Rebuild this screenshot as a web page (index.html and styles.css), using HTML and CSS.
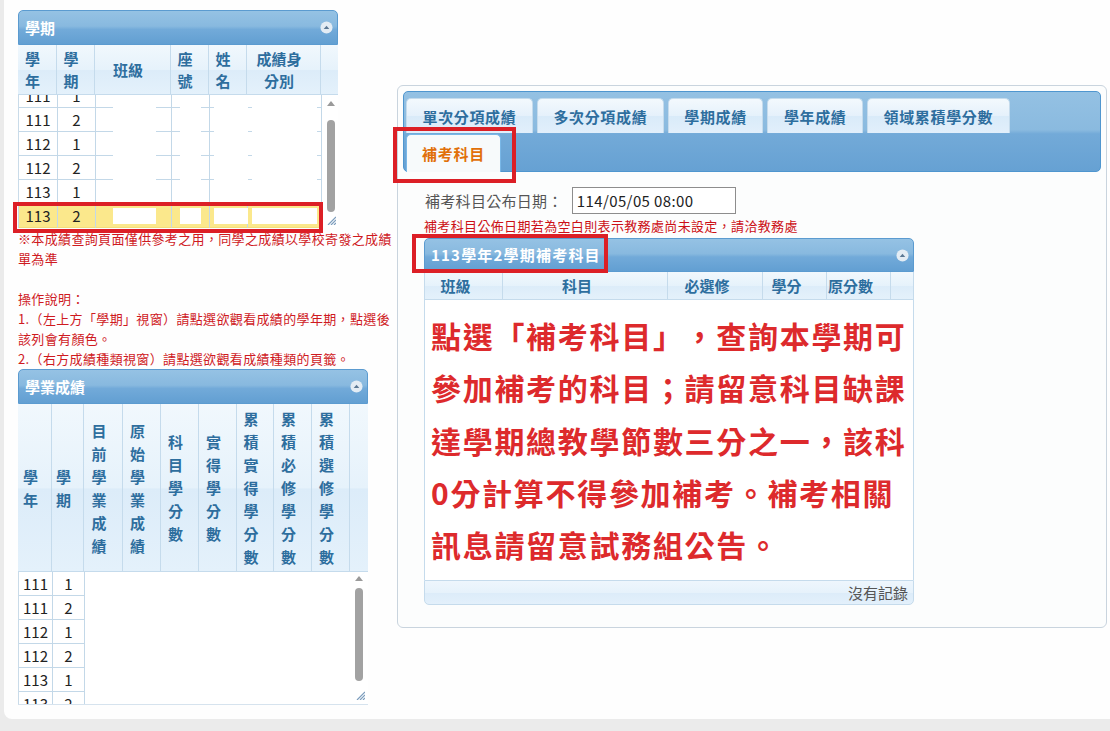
FILE: index.html
```html
<!DOCTYPE html>
<html lang="zh-Hant">
<head>
<meta charset="utf-8">
<title>成績查詢</title>
<link rel="stylesheet" href="styles.css">
</head>
<body>
<div class="page">
  <div class="left">
    <section class="grid g1">
      <div class="gtitle"><span>學期</span>
        <svg class="tg" viewBox="0 0 14 14" width="13" height="13"><circle cx="7" cy="7" r="6.5" fill="#e3ecf4"/><path d="M4 8.6 L7 5.2 L10 8.6 Z" fill="#5b7894"/></svg>
      </div>
      <div class="ghead g1cols">
        <div class="th">學<br>年</div>
        <div class="th">學<br>期</div>
        <div class="th">班級</div>
        <div class="th">座<br>號</div>
        <div class="th">姓<br>名</div>
        <div class="th">成績身<br>分別</div>
        <div class="th"></div>
      </div>
      <div class="gbody g1body">
        <div class="rows">
          <div class="tr g1row"><div class="td">111</div><div class="td">1</div><div class="td"><i class="rd rd3"></i></div><div class="td"><i class="rd rd4"></i></div><div class="td"><i class="rd rd5"></i></div><div class="td"><i class="rd rd6"></i></div></div>
          <div class="tr g1row"><div class="td">111</div><div class="td">2</div><div class="td"><i class="rd rd3"></i></div><div class="td"><i class="rd rd4"></i></div><div class="td"><i class="rd rd5"></i></div><div class="td"><i class="rd rd6"></i></div></div>
          <div class="tr g1row"><div class="td">112</div><div class="td">1</div><div class="td"><i class="rd rd3"></i></div><div class="td"><i class="rd rd4"></i></div><div class="td"><i class="rd rd5"></i></div><div class="td"><i class="rd rd6"></i></div></div>
          <div class="tr g1row"><div class="td">112</div><div class="td">2</div><div class="td"><i class="rd rd3"></i></div><div class="td"><i class="rd rd4"></i></div><div class="td"><i class="rd rd5"></i></div><div class="td"><i class="rd rd6"></i></div></div>
          <div class="tr g1row"><div class="td">113</div><div class="td">1</div><div class="td"><i class="rd rd3"></i></div><div class="td"><i class="rd rd4"></i></div><div class="td"><i class="rd rd5"></i></div><div class="td"><i class="rd rd6"></i></div></div>
          <div class="tr g1row hl"><div class="td">113</div><div class="td">2</div><div class="td"><i class="rd rd3"></i></div><div class="td"><i class="rd rd4"></i></div><div class="td"><i class="rd rd5"></i></div><div class="td"><i class="rd rd6"></i></div></div>
        </div>
        <div class="vscroll vs1">
          <span class="arrow"></span>
          <span class="thumb"></span>
          <svg class="grip" viewBox="0 0 9 9" width="9" height="9"><path d="M9 1 L1 9 M9 4 L4 9 M9 7 L7 9" stroke="#7c9dbd" stroke-width="1.2"/></svg>
        </div>
      </div>
    </section>

    <div class="notes">※本成績查詢頁面僅供參考之用，同學之成績以學校寄發之成績<br>單為準<br><br>操作說明：<br>1.（左上方「學期」視窗）請點選欲觀看成績的學年期，點選後<br>該列會有顏色。<br>2.（右方成績種類視窗）請點選欲觀看成績種類的頁籤。</div>

    <section class="grid g2">
      <div class="gtitle"><span>學業成績</span>
        <svg class="tg" viewBox="0 0 14 14" width="13" height="13"><circle cx="7" cy="7" r="6.5" fill="#e3ecf4"/><path d="M4 8.6 L7 5.2 L10 8.6 Z" fill="#5b7894"/></svg>
      </div>
      <div class="ghead g2cols">
        <div class="th">學<br>年</div>
        <div class="th">學<br>期</div>
        <div class="th">目<br>前<br>學<br>業<br>成<br>績</div>
        <div class="th">原<br>始<br>學<br>業<br>成<br>績</div>
        <div class="th">科<br>目<br>學<br>分<br>數</div>
        <div class="th">實<br>得<br>學<br>分<br>數</div>
        <div class="th">累<br>積<br>實<br>得<br>學<br>分<br>數</div>
        <div class="th">累<br>積<br>必<br>修<br>學<br>分<br>數</div>
        <div class="th">累<br>積<br>選<br>修<br>學<br>分<br>數</div>
        <div class="th"></div>
      </div>
      <div class="gbody g2body">
        <div class="rows2">
          <div class="tr g2row"><div class="td">111</div><div class="td">1</div></div>
          <div class="tr g2row"><div class="td">111</div><div class="td">2</div></div>
          <div class="tr g2row"><div class="td">112</div><div class="td">1</div></div>
          <div class="tr g2row"><div class="td">112</div><div class="td">2</div></div>
          <div class="tr g2row"><div class="td">113</div><div class="td">1</div></div>
          <div class="tr g2row"><div class="td">113</div><div class="td">2</div></div>
        </div>
        <div class="vscroll vs2">
          <span class="arrow"></span>
          <span class="thumb"></span>
          <svg class="grip" viewBox="0 0 9 9" width="9" height="9"><path d="M9 1 L1 9 M9 4 L4 9 M9 7 L7 9" stroke="#7c9dbd" stroke-width="1.2"/></svg>
        </div>
      </div>
    </section>
  </div>

  <div class="right">
    <div class="tabs">
      <div class="tabrow">
        <span class="tab">單次分項成績</span>
        <span class="tab">多次分項成績</span>
        <span class="tab">學期成績</span>
        <span class="tab">學年成績</span>
        <span class="tab">領域累積學分數</span>
      </div>
      <div class="tabrow tabrow2">
        <span class="tab active">補考科目</span>
      </div>
    </div>
    <div class="tabpanel">
      <div class="daterow">
        <label class="dlabel" for="pubdate">補考科目公布日期：</label>
        <input id="pubdate" class="dinput" type="text" value="114/05/05 08:00" readonly>
      </div>
      <p class="hint">補考科目公佈日期若為空白則表示教務處尚未設定，請洽教務處</p>
      <section class="grid g3">
        <div class="gtitle"><span class="t3">113學年2學期補考科目</span>
          <svg class="tg" viewBox="0 0 14 14" width="13" height="13"><circle cx="7" cy="7" r="6.5" fill="#e3ecf4"/><path d="M4 8.6 L7 5.2 L10 8.6 Z" fill="#5b7894"/></svg>
        </div>
        <div class="ghead g3cols">
          <div class="th">班級</div>
          <div class="th">科目</div>
          <div class="th">必選修</div>
          <div class="th">學分</div>
          <div class="th">原分數</div>
          <div class="th"></div>
        </div>
        <div class="g3body">
          <p class="bigmsg">點選「補考科目」，查詢本學期可<br>參加補考的科目；請留意科目缺課<br>達學期總教學節數三分之一，該科<br>0分計算不得參加補考。補考相關<br>訊息請留意試務組公告。</p>
        </div>
        <div class="gfoot">沒有記錄</div>
      </section>
    </div>
  </div>

  <div class="mark mark-row"></div>
  <div class="mark mark-tab"></div>
  <div class="mark mark-title"></div>
</div>
</body>
</html>
```

FILE: styles.css
```css
* { box-sizing: border-box; }

body {
  margin: 0;
  background: #ebebeb;
  font-family: "Noto Sans CJK TC", "Noto Sans", sans-serif;
  color: #222;
  text-spacing-trim: space-all;
}

.page {
  position: relative;
  margin-left: 4px;
  height: 719px;
  background: #fefefe;
  border-bottom-left-radius: 8px;
  display: flex;
  align-items: flex-start;
  padding: 10px 0 0 14px;
  overflow: hidden;
}

.left {
  width: 375px;
  flex: none;
  margin-right: 4px;
}

/* ---------- grid panels ---------- */
.gtitle {
  display: flex;
  align-items: center;
  justify-content: space-between;
  height: 35px;
  padding: 0 4px 0 6px;
  background: linear-gradient(#95c2e4 0%, #88b9df 46%, #72aad9 56%, #629fd2 100%);
  border: 1px solid #5b9bd0;
  border-radius: 5px 5px 0 0;
  color: #fff;
  font-weight: bold;
  font-size: 15px;
  line-height: 20px;
}

.tg { display: block; flex: none; }

.ghead {
  display: grid;
  background: linear-gradient(#f1f8fd 0%, #e6f2fb 50%, #dcecf9 51%, #e4f1fb 100%);
  border-bottom: 1px solid #c5dbec;
}

.th {
  display: flex;
  align-items: center;
  justify-content: center;
  text-align: center;
  border-right: 1px solid #c5dbec;
  color: #2e6e9e;
  font-weight: bold;
  font-size: 15px;
  line-height: 22px;
  padding-right: 9px;
}
.th:last-child { border-right: 0; padding-right: 0; }

.gbody {
  display: flex;
  background: #fff;
  overflow: hidden;
  border-left: 1px solid #c9dbe9;
}

.tr { display: grid; }

.td {
  height: 24px;
  border-right: 1px solid #c3d8e8;
  border-bottom: 1px solid #c3d8e8;
  font-size: 15px;
  line-height: 23px;
  text-align: center;
  color: #222;
}

/* grid 1 : 學期 */
.g1 { width: 320px; }
.g1cols { grid-template-columns: 39px 38px 76px 38px 38px 74px 17px; height: 50px; }
.g1body { height: 133px; }
.rows { width: 303px; margin-top: -11px; }
.g1row { grid-template-columns: 39px 38px 76px 38px 38px 74px; }

.rd { display: block; height: 24px; background: #fff; }
.rd3 { margin-left: 17px; width: 43px; }
.rd4 { margin-left: 8px; width: 21px; }
.rd5 { margin-left: 4px; width: 34px; }
.rd6 { margin-left: 4px; width: 65px; }

.hl .td { background: #fbe88c; border-bottom-color: #f4dc7a; }
.hl .rd { height: 16px; margin-top: 4px; }

.vscroll {
  flex: none;
  display: flex;
  flex-direction: column;
  align-items: center;
  background: #fff;
}
.vs1 { width: 17px; }
.vs2 { width: 18px; }

.arrow {
  display: block;
  width: 0;
  height: 0;
  border-left: 4px solid transparent;
  border-right: 4px solid transparent;
  border-bottom: 5px solid #9a9a9a;
}
.thumb {
  display: block;
  width: 8px;
  border-radius: 4px;
  background: #a2a2a2;
}
.grip { display: block; margin-left: 2px; }

.vs1 .arrow { margin-top: 6px; }
.vs1 .thumb { margin-top: 14px; height: 92px; }
.vs1 .grip { margin-top: 4px; }

.vs2 .arrow { margin-top: 4px; }
.vs2 .thumb { margin-top: 7px; height: 93px; }
.vs2 .grip { margin-top: 10px; }

/* notes */
.notes {
  margin-top: 1px;
  font-size: 13px;
  line-height: 20px;
  letter-spacing: 0.35px;
  color: #cf1a1f;
  white-space: nowrap;
}

/* grid 2 : 學業成績 */
.g2 { width: 350px; }
.g2cols { grid-template-columns: 34px 32px 39px 38px 38px 38px 37px 38px 38px 18px; height: 168px; }
.g2cols .th { line-height: 23px; padding-right: 8px; }
.g2body { height: 133px; border-bottom: 1px solid #d6e3ee; }
.rows2 { width: 332px; }
.g2row { grid-template-columns: 34px 32px; }

/* ---------- right side ---------- */
.right {
  width: 710px;
  height: 543px;
  flex: none;
  margin-top: 75px;
  border: 1px solid #c9d4de;
  border-radius: 6px;
  background: #fcfdfd;
  padding: 5px;
}

.tabs {
  height: 81px;
  padding: 6px 2px 0;
  border: 1px solid #4f96cf;
  border-radius: 5px;
  background: linear-gradient(#94c1e3 0%, #8abadf 48%, #73aad8 53%, #66a1d3 100%);
  display: flex;
  flex-direction: column;
  gap: 1px;
}

.tabrow { display: flex; gap: 4px; height: 35px; }
.tabrow2 { height: 37px; }

.tab {
  display: flex;
  align-items: center;
  height: 35px;
  padding: 0 15.5px;
  border: 1px solid #c5dbec;
  border-bottom: 0;
  border-radius: 5px 5px 0 0;
  background: linear-gradient(#f3f9fd 0%, #e5f1fb 50%, #d9ebf9 51%, #e2effb 100%);
  color: #2e6e9e;
  font-weight: bold;
  font-size: 15px;
  letter-spacing: 0.65px;
  white-space: nowrap;
}

.tab.active {
  height: 38px;
  margin-bottom: -1px;
  padding: 0 15px;
  letter-spacing: 0.75px;
  background: #f7fafb;
  border-color: #79b7e7;
  color: #e17009;
}

.tabpanel { padding: 15px 0 0 21px; }

.daterow { display: flex; align-items: center; height: 27px; margin-left: 1px; }
.dlabel {
  font-size: 15px;
  letter-spacing: 0.3px;
  color: #555;
  line-height: 20px;
}
.dinput {
  width: 164px;
  height: 27px;
  margin: 0 0 0 9px;
  padding: 0 4px;
  border: 1px solid #8d8d8d;
  background: #fff;
  font-family: "Noto Sans CJK TC", "Noto Sans", sans-serif;
  font-size: 15px;
  letter-spacing: 0.4px;
  color: #222;
}

.hint {
  margin: 3px 0 3px;
  font-size: 13px;
  line-height: 18px;
  letter-spacing: 0.35px;
  color: #cc1016;
  white-space: nowrap;
}

.g3 { width: 490px; }
.g3 .gtitle { height: 34px; }
.t3 { letter-spacing: 1.2px; }
.g3cols { grid-template-columns: 78px 165px 95px 64px 64px 24px; height: 28px; border-left: 1px solid #c5dbec; border-right: 1px solid #c5dbec; }
.g3cols .th { padding-right: 16px; line-height: 20px; }

.g3body {
  height: 280px;
  background: #fff;
  border-left: 1px solid #c5dbec;
  border-right: 1px solid #c5dbec;
}

.bigmsg {
  margin: 0;
  padding: 9px 0 0 6px;
  font-size: 30px;
  font-weight: bold;
  line-height: 52.3px;
  letter-spacing: 1.7px;
  color: #dd2a2c;
  white-space: nowrap;
}

.gfoot {
  height: 25px;
  border: 1px solid #c5dbec;
  border-radius: 0 0 5px 5px;
  background: linear-gradient(#eef6fd 0%, #e6f2fb 50%, #dcecf9 51%, #e3f0fb 100%);
  text-align: right;
  padding-right: 5px;
  font-size: 15px;
  line-height: 23px;
  color: #555;
}

/* ---------- red annotation boxes ---------- */
.mark {
  position: absolute;
  border: 4px solid #dc1f26;
  pointer-events: none;
}
.mark-row { left: 9px; top: 202px; width: 310px; height: 31px; }
.mark-tab { left: 389px; top: 127px; width: 123px; height: 56px; }
.mark-title { left: 408px; top: 234px; width: 196px; height: 39px; }
```
